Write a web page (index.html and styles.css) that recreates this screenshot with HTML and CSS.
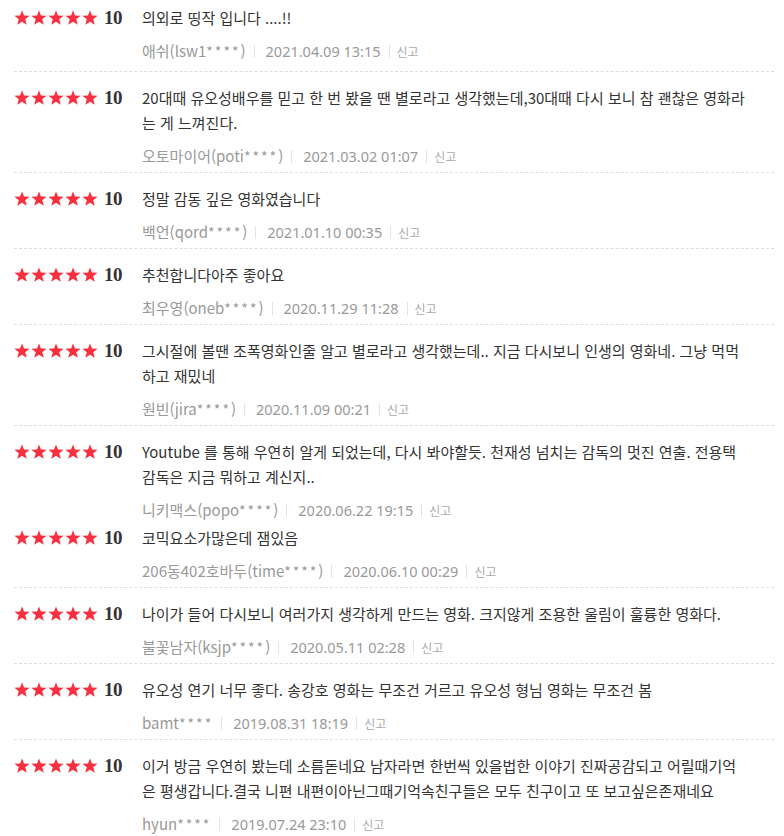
FILE: index.html
```html
<!DOCTYPE html>
<html lang="ko">
<head>
<meta charset="utf-8">
<title>관람객 평점</title>
<link rel="stylesheet" href="styles.css">
</head>
<body>
<svg class="defs" width="0" height="0" aria-hidden="true">
  <defs>
    <symbol id="star" viewBox="0 0 16 16">
      <polygon points="8,0.4 10,5.6 15.6,5.8 11.2,9.3 12.8,14.8 8,11.7 3.2,14.8 4.8,9.3 0.4,5.8 6,5.6"/>
    </symbol>
    <symbol id="stars5" viewBox="0 0 84 16">
      <use href="#star" x="0" y="0" width="16" height="16"/>
      <use href="#star" x="17" y="0" width="16" height="16"/>
      <use href="#star" x="34" y="0" width="16" height="16"/>
      <use href="#star" x="51" y="0" width="16" height="16"/>
      <use href="#star" x="68" y="0" width="16" height="16"/>
    </symbol>
  </defs>
</svg>
<ul class="reviews">
  <li class="review">
    <div class="score"><svg class="stars"><use href="#stars5"/></svg><em>10</em></div>
    <div class="body">
      <p class="text">의외로 띵작 입니다 ....!!</p>
      <div class="meta"><span class="name">애쉬(lsw1<span class="mask">****</span>)</span><span class="date">2021.04.09 13:15</span><a class="report">신고</a></div>
    </div>
  </li>
  <li class="review">
    <div class="score"><svg class="stars"><use href="#stars5"/></svg><em>10</em></div>
    <div class="body">
      <p class="text">20대때 유오성배우를 믿고 한 번 봤을 땐 별로라고 생각했는데,30대때 다시 보니 참 괜찮은 영화라<br>는 게 느껴진다.</p>
      <div class="meta"><span class="name">오토마이어(poti<span class="mask">****</span>)</span><span class="date">2021.03.02 01:07</span><a class="report">신고</a></div>
    </div>
  </li>
  <li class="review">
    <div class="score"><svg class="stars"><use href="#stars5"/></svg><em>10</em></div>
    <div class="body">
      <p class="text">정말 감동 깊은 영화였습니다</p>
      <div class="meta"><span class="name">백언(qord<span class="mask">****</span>)</span><span class="date">2021.01.10 00:35</span><a class="report">신고</a></div>
    </div>
  </li>
  <li class="review">
    <div class="score"><svg class="stars"><use href="#stars5"/></svg><em>10</em></div>
    <div class="body">
      <p class="text">추천합니다아주 좋아요</p>
      <div class="meta"><span class="name">최우영(oneb<span class="mask">****</span>)</span><span class="date">2020.11.29 11:28</span><a class="report">신고</a></div>
    </div>
  </li>
  <li class="review">
    <div class="score"><svg class="stars"><use href="#stars5"/></svg><em>10</em></div>
    <div class="body">
      <p class="text">그시절에 볼땐 조폭영화인줄 알고 별로라고 생각했는데.. 지금 다시보니 인생의 영화네. 그냥 먹먹<br>하고 재밌네</p>
      <div class="meta"><span class="name">원빈(jira<span class="mask">****</span>)</span><span class="date">2020.11.09 00:21</span><a class="report">신고</a></div>
    </div>
  </li>
  <li class="review no-line">
    <div class="score"><svg class="stars"><use href="#stars5"/></svg><em>10</em></div>
    <div class="body">
      <p class="text">Youtube 를 통해 우연히 알게 되었는데, 다시 봐야할듯. 천재성 넘치는 감독의 멋진 연출. 전용택<br>감독은 지금 뭐하고 계신지..</p>
      <div class="meta"><span class="name">니키맥스(popo<span class="mask">****</span>)</span><span class="date">2020.06.22 19:15</span><a class="report">신고</a></div>
    </div>
  </li>
  <li class="review tight">
    <div class="score"><svg class="stars"><use href="#stars5"/></svg><em>10</em></div>
    <div class="body">
      <p class="text">코믹요소가많은데 잼있음</p>
      <div class="meta"><span class="name">206동402호바두(time<span class="mask">****</span>)</span><span class="date">2020.06.10 00:29</span><a class="report">신고</a></div>
    </div>
  </li>
  <li class="review">
    <div class="score"><svg class="stars"><use href="#stars5"/></svg><em>10</em></div>
    <div class="body">
      <p class="text">나이가 들어 다시보니 여러가지 생각하게 만드는 영화. 크지않게 조용한 울림이 훌륭한 영화다.</p>
      <div class="meta"><span class="name">불꽃남자(ksjp<span class="mask">****</span>)</span><span class="date">2020.05.11 02:28</span><a class="report">신고</a></div>
    </div>
  </li>
  <li class="review">
    <div class="score"><svg class="stars"><use href="#stars5"/></svg><em>10</em></div>
    <div class="body">
      <p class="text">유오성 연기 너무 좋다. 송강호 영화는 무조건 거르고 유오성 형님 영화는 무조건 봄</p>
      <div class="meta"><span class="name">bamt<span class="mask">****</span></span><span class="date">2019.08.31 18:19</span><a class="report">신고</a></div>
    </div>
  </li>
  <li class="review">
    <div class="score"><svg class="stars"><use href="#stars5"/></svg><em>10</em></div>
    <div class="body">
      <p class="text">이거 방금 우연히 봤는데 소름돋네요 남자라면 한번씩 있을법한 이야기 진짜공감되고 어릴때기억<br>은 평생갑니다.결국 니편 내편이아닌그때기억속친구들은 모두 친구이고 또 보고싶은존재네요</p>
      <div class="meta"><span class="name">hyun<span class="mask">****</span></span><span class="date">2019.07.24 23:10</span><a class="report">신고</a></div>
    </div>
  </li>
</ul>
</body>
</html>
```

FILE: styles.css
```css
html, body {
  margin: 0;
  padding: 0;
  background: #fff;
}

body {
  font-family: "Noto Sans CJK KR", "Noto Sans", sans-serif;
  color: #333;
  overflow: hidden;
}

.defs {
  position: absolute;
  width: 0;
  height: 0;
  overflow: hidden;
}

.reviews {
  list-style: none;
  margin: 0 10px 0 14px;
  padding: 0;
}

.review {
  display: flex;
  padding: 13px 0 6px;
  border-bottom: 1px dashed #dedede;
}

.review:first-child {
  padding-top: 5px;
  padding-bottom: 10px;
}

.review.no-line {
  border-bottom: none;
  padding-bottom: 0;
}

.review.tight {
  padding-top: 5px;
}

.score {
  flex: 0 0 128px;
  display: flex;
  align-items: center;
  height: 25px;
}

.stars {
  width: 84px;
  height: 16px;
  fill: #f7303f;
  display: block;
}

.score em {
  font-style: normal;
  font-family: "Liberation Serif", "Times New Roman", serif;
  font-weight: bold;
  font-size: 19px;
  color: #333;
  margin-left: 6px;
  line-height: 25px;
  letter-spacing: -0.5px;
}

.body {
  flex: 1;
  min-width: 0;
}

.text {
  margin: 0;
  font-size: 15px;
  line-height: 25px;
  color: #333;
}

.meta {
  margin-top: 11px;
  display: flex;
  align-items: center;
  height: 20px;
  font-size: 15px;
  line-height: 20px;
  white-space: nowrap;
}

.name {
  color: #999;
}

.mask {
  letter-spacing: 2px;
  font-size: 14px;
}

.date {
  color: #999;
  font-family: "Noto Sans", sans-serif;
  font-size: 14.5px;
  border-left: 1px solid #e4e4e4;
  padding-left: 11px;
  margin-left: 8px;
  line-height: 13px;
}

.report {
  color: #aaa;
  font-size: 12px;
  border-left: 1px solid #e4e4e4;
  padding-left: 7px;
  margin-left: 8px;
  line-height: 13px;
  cursor: pointer;
}
```
